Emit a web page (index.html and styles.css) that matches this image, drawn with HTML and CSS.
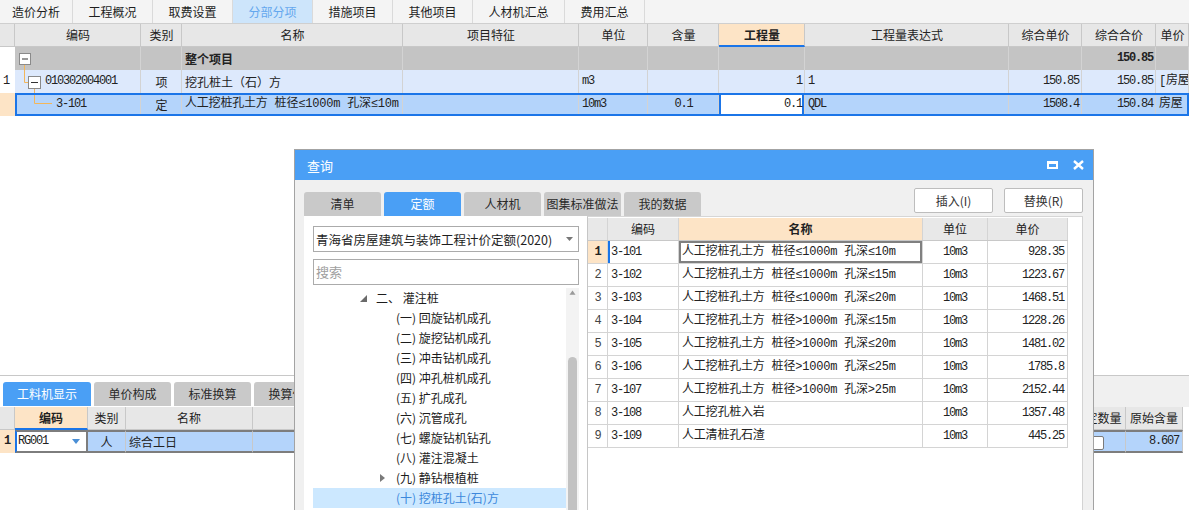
FILE: index.html
```html
<!DOCTYPE html>
<html lang="zh-CN">
<head>
<meta charset="utf-8">
<title>分部分项</title>
<link rel="stylesheet" href="styles.css">
</head>
<body>
<div class="app">
  <nav class="topnav">
    <span class="tab w73">造价分析</span>
    <span class="tab">工程概况</span>
    <span class="tab">取费设置</span>
    <span class="tab active">分部分项</span>
    <span class="tab">措施项目</span>
    <span class="tab">其他项目</span>
    <span class="tab w92">人材机汇总</span>
    <span class="tab">费用汇总</span>
  </nav>

  <div class="mtable">
    <div class="mrow mhead">
      <div></div><div>编码</div><div>类别</div><div>名称</div><div>项目特征</div><div>单位</div><div>含量</div><div class="hot">工程量</div><div>工程量表达式</div><div>综合单价</div><div>综合合价</div><div>单价</div>
    </div>
    <div class="mrow rgray">
      <div class="rn"></div>
      <div class="code"><svg class="conn w20" viewBox="0 0 20 23"><path d="M9.5 17V23" stroke="#f3b65a" fill="none"/><rect x="4.5" y="6.5" width="11" height="11" fill="#fff" stroke="#8a8a8a"/><path d="M7 12H13" stroke="#333"/></svg></div>
      <div></div>
      <div class="b">整个项目</div>
      <div></div><div></div><div></div><div></div><div></div><div></div>
      <div class="n b">150.85</div>
      <div></div>
    </div>
    <div class="mrow rlight">
      <div class="rn m">1</div>
      <div class="code"><svg class="conn w30" viewBox="0 0 30 23"><path d="M9.5 0V12.5H13" stroke="#f3b65a" fill="none"/><path d="M19.5 18V23" stroke="#f3b65a" fill="none"/><rect x="13.5" y="6.5" width="12" height="12" fill="#fff" stroke="#8a8a8a"/><path d="M16 12.5H23" stroke="#333"/></svg><span class="m">010302004001</span></div>
      <div class="c">项</div>
      <div>挖孔桩土（石）方</div>
      <div></div>
      <div class="m">m3</div>
      <div></div>
      <div class="n">1</div>
      <div class="m">1</div>
      <div class="n">150.85</div>
      <div class="n">150.85</div>
      <div class="mix">[房屋</div>
    </div>
    <div class="mrow rsel">
      <div class="rn peach"></div>
      <div class="code"><svg class="conn w41" viewBox="0 0 41 23"><path d="M19.5 0V10.5H37" stroke="#f3b65a" fill="none"/></svg><span class="m">3-101</span></div>
      <div class="c">定</div>
      <div class="mix">人工挖桩孔土方 桩径≤1000m 孔深≤10m</div>
      <div></div>
      <div class="m">10m3</div>
      <div class="m c">0.1</div>
      <div class="n cur">0.1</div>
      <div class="m">QDL</div>
      <div class="n">1508.4</div>
      <div class="n">150.84</div>
      <div class="mix">房屋</div>
    </div>
  </div>

  <div class="spacer"></div>

  <section class="bottom">
    <div class="btabs">
      <span class="btab on w88">工料机显示</span>
      <span class="btab">单价构成</span>
      <span class="btab">标准换算</span>
      <span class="btab">换算信息</span>
      <span class="bfill"></span>
    </div>
    <div class="btable">
      <div class="brow bhead">
        <div></div><div class="hot">编码</div><div>类别</div><div>名称</div><div></div><div>锁定数量</div><div>原始含量</div>
      </div>
      <div class="brow bsel">
        <div class="rn peach b m">1</div>
        <div class="combo"><span class="m">RG001</span><svg width="8" height="5" viewBox="0 0 8 5"><path d="M0 0H8L4 5Z" fill="#4a8fd6"/></svg></div>
        <div class="c">人</div>
        <div>综合工日</div>
        <div></div>
        <div class="c"><span class="chk"></span></div>
        <div class="n">8.607</div>
      </div>
    </div>
  </section>

  <div class="dialog">
    <div class="dtitle">
      <span>查询</span>
      <span class="dicons">
        <svg width="11" height="8" viewBox="0 0 11 8"><rect x="1" y="1.5" width="9" height="5.5" fill="none" stroke="#fff" stroke-width="2"/><rect x="0" y="0" width="11" height="3" fill="#fff"/></svg>
        <svg width="11" height="10" viewBox="0 0 11 10"><path d="M1 1L10 9M10 1L1 9" stroke="#fff" stroke-width="2.4"/></svg>
      </span>
    </div>
    <div class="dbody">
      <div class="dtoolbar">
        <div class="dtabs">
          <span class="dtab">清单</span>
          <span class="dtab on">定额</span>
          <span class="dtab">人材机</span>
          <span class="dtab">图集标准做法</span>
          <span class="dtab">我的数据</span>
        </div>
        <div class="dbtns">
          <button class="btn">插入(I)</button>
          <button class="btn">替换(R)</button>
        </div>
      </div>
      <div class="dcontent">
        <div class="left">
          <div class="select"><span>青海省房屋建筑与装饰工程计价定额(2020)</span><svg width="7" height="4" viewBox="0 0 7 4"><path d="M0 0H7L3.5 4Z" fill="#777"/></svg></div>
          <div class="search">搜索</div>
          <div class="tree">
            <div class="tlist">
              <div class="trow lvl1"><svg class="tri" width="7" height="7" viewBox="0 0 7 7"><path d="M7 0V7H0Z" fill="#6a6a6a"/></svg><span>二、 灌注桩</span></div>
              <div class="trow lvl2">(一) 回旋钻机成孔</div>
              <div class="trow lvl2">(二) 旋挖钻机成孔</div>
              <div class="trow lvl2">(三) 冲击钻机成孔</div>
              <div class="trow lvl2">(四) 冲孔桩机成孔</div>
              <div class="trow lvl2">(五) 扩孔成孔</div>
              <div class="trow lvl2">(六) 沉管成孔</div>
              <div class="trow lvl2">(七) 螺旋钻机钻孔</div>
              <div class="trow lvl2">(八) 灌注混凝土</div>
              <div class="trow lvl2b"><svg class="arr" width="5" height="8" viewBox="0 0 5 8"><path d="M0 0L5 4L0 8Z" fill="#7a7a7a"/></svg>(九) 静钻根植桩</div>
              <div class="trow lvl2 sel">(十) 挖桩孔土(石)方</div>
            </div>
            <div class="vscroll">
              <svg class="up" width="13" height="12" viewBox="0 0 13 12"><path d="M3 8H10L6.5 3Z" fill="#9a9a9a"/></svg>
              <div class="thumb"></div>
            </div>
          </div>
        </div>
        <div class="right">
          <div class="dtable">
            <div class="drow dhead"><div></div><div>编码</div><div class="hot">名称</div><div>单位</div><div>单价</div></div>
            <div class="drow first"><div class="rn peach b m">1</div><div class="m code1">3-101</div><div class="mix focus">人工挖桩孔土方 桩径≤1000m 孔深≤10m</div><div class="c m">10m3</div><div class="n">928.35</div></div>
            <div class="drow"><div class="rn m">2</div><div class="m">3-102</div><div class="mix">人工挖桩孔土方 桩径≤1000m 孔深≤15m</div><div class="c m">10m3</div><div class="n">1223.67</div></div>
            <div class="drow"><div class="rn m">3</div><div class="m">3-103</div><div class="mix">人工挖桩孔土方 桩径≤1000m 孔深≤20m</div><div class="c m">10m3</div><div class="n">1468.51</div></div>
            <div class="drow"><div class="rn m">4</div><div class="m">3-104</div><div class="mix">人工挖桩孔土方 桩径&gt;1000m 孔深≤15m</div><div class="c m">10m3</div><div class="n">1228.26</div></div>
            <div class="drow"><div class="rn m">5</div><div class="m">3-105</div><div class="mix">人工挖桩孔土方 桩径&gt;1000m 孔深≤20m</div><div class="c m">10m3</div><div class="n">1481.02</div></div>
            <div class="drow"><div class="rn m">6</div><div class="m">3-106</div><div class="mix">人工挖桩孔土方 桩径&gt;1000m 孔深≤25m</div><div class="c m">10m3</div><div class="n">1785.8</div></div>
            <div class="drow"><div class="rn m">7</div><div class="m">3-107</div><div class="mix">人工挖桩孔土方 桩径&gt;1000m 孔深&gt;25m</div><div class="c m">10m3</div><div class="n">2152.44</div></div>
            <div class="drow"><div class="rn m">8</div><div class="m">3-108</div><div class="mix">人工挖孔桩入岩</div><div class="c m">10m3</div><div class="n">1357.48</div></div>
            <div class="drow"><div class="rn m">9</div><div class="m">3-109</div><div class="mix">人工清桩孔石渣</div><div class="c m">10m3</div><div class="n">445.25</div></div>
          </div>
        </div>
      </div>
    </div>
  </div>
</div>
</body>
</html>
```

FILE: styles.css
```css
* { box-sizing: border-box; }
html, body { margin: 0; padding: 0; }
body {
  width: 1189px;
  height: 510px;
  overflow: hidden;
  background: #fff;
  font-family: "Noto Sans CJK SC", "Noto Sans", sans-serif;
  font-size: 12px;
  color: #222;
}
svg { display: block; }
.app { position: relative; height: 510px; display: flex; flex-direction: column; }

/* shared text helpers */
.m, .n { font-family: "Liberation Mono", "Noto Sans CJK SC", monospace; letter-spacing: -1.2px; }
.mix { font-family: "Liberation Mono", "Noto Sans CJK SC", monospace; letter-spacing: -0.2px; }
.n { text-align: right; }
.c { text-align: center; }
.b { font-weight: bold; }
.peach { background: #fde4c6 !important; }

/* top navigation */
.topnav { display: flex; height: 24px; background: #f4f4f4; border-bottom: 1px solid #cfcfcf; flex: none; }
.tab { width: 80px; border-right: 1px solid #dadada; text-align: center; line-height: 23px; color: #1e1e1e; }
.tab.w73 { width: 73px; }
.tab.w92 { width: 92px; }
.tab.active { background: #cde5fb; color: #64a7ee; }

/* main table */
.mtable { flex: none; }
.mrow {
  display: grid;
  grid-template-columns: 15px 126px 41px 221px 176px 69px 71px 86px 204px 73px 74px 1fr;
  height: 23px;
  position: relative;
}
.mrow > div {
  border-right: 1px solid #d3d3d3;
  line-height: 23px;
  padding: 0 2px 0 3px;
  white-space: nowrap;
  overflow: hidden;
}
.mhead > div {
  background: #e7e7e7;
  border-right-color: #c8c8c8;
  border-bottom: 1px solid #c8c8c8;
  text-align: center;
  line-height: 22px;
}
.mhead > div.hot { background: #fde4c6; font-weight: bold; border-bottom: 2px solid #1b75e8; line-height: 21px; }
.rgray > div { background: #c4c4c4; }
.rlight > div { background: #dde9fc; }
.rsel > div { background: #b4d4fb; }
.mrow > div.rn { background: #fff; border-right: none; padding-left: 3px; }
.mrow > div.rn.peach { background: #fde4c6; }
.mrow > div.code { padding: 0; display: flex; align-items: center; }
.conn { flex: none; height: 23px; }
.conn.w20 { width: 20px; }
.conn.w30 { width: 30px; }
.conn.w41 { width: 41px; }
.rsel::after {
  content: "";
  position: absolute;
  left: 15px; right: 0; top: 0; bottom: 0;
  border: 2px solid #1b75e8;
  pointer-events: none;
}
.rsel > div.cur { background: #fff; box-shadow: inset 2px 0 0 #1b75e8, inset -2px 0 0 #1b75e8; }

.spacer { flex: 1; }

/* bottom panel */
.bottom { height: 135px; flex: none; border-top: 1px solid #c8c8c8; display: flex; flex-direction: column; }
.btabs { height: 31px; display: flex; padding-left: 3px; gap: 3px; }
.btab {
  width: 77px;
  margin: 6px 0 1px;
  border-radius: 3px 3px 0 0;
  background: #c9c9c9;
  text-align: center;
  line-height: 24px;
  color: #2a2a2a;
}
.btab.w88 { width: 88px; }
.btab.on { background: #4a9ff5; color: #fff; }
.bfill { flex: 1; background: #f0f0f0; margin-left: -3px; }
.btable { width: 1183px; }
.brow { display: grid; grid-template-columns: 15px 73px 38px 127px 817px 56px 57px; height: 23px; }
.brow > div { border-right: 1px solid #c8c8c8; padding: 0 3px; white-space: nowrap; overflow: hidden; }
.bhead > div { background: #e7e7e7; border-bottom: 1px solid #c8c8c8; text-align: center; line-height: 22px; }
.bhead > div.hot { background: #fde4c6; font-weight: bold; border-bottom: 2px solid #1b75e8; line-height: 21px; }
.bsel > div {
  background: #b4d4fb;
  border-top: 2px solid #7d7d7d;
  border-bottom: 2px solid #7d7d7d;
  line-height: 19px;
}
.bsel > div.rn { border-top: none; border-bottom: none; border-right: none; line-height: 23px; padding-left: 4px; }
.bsel > div.combo {
  background: #fff;
  border-left: 2px solid #1b75e8;
  border-right: 2px solid #7d7d7d;
  display: flex;
  align-items: center;
  justify-content: space-between;
  padding: 0 6px 0 1px;
}
.chk { display: inline-block; width: 12px; height: 14px; background: #fff; border: 1px solid #7a7a7a; border-radius: 2px; vertical-align: middle; margin-top: -2px; }

/* dialog */
.dialog {
  position: absolute;
  left: 294px;
  top: 149px;
  width: 800px;
  height: 380px;
  border: 1px solid #a3a3a3;
  background: #f0f0f0;
  display: flex;
  flex-direction: column;
}
.dtitle {
  height: 30px;
  flex: none;
  background: #4a9ff5;
  color: #fff;
  font-size: 13px;
  display: flex;
  align-items: center;
  justify-content: space-between;
  padding: 0 9px 0 12px;
}
.dicons { display: flex; align-items: center; gap: 15px; }
.dbody { flex: 1; display: flex; flex-direction: column; padding: 0 10px 0 9px; min-height: 0; }
.dtoolbar { height: 36px; flex: none; display: flex; justify-content: space-between; }
.dtabs { display: flex; gap: 3px; align-self: flex-end; }
.dtab {
  width: 77px;
  height: 24px;
  line-height: 24px;
  text-align: center;
  background: #c9c9c9;
  border-radius: 3px 3px 0 0;
  color: #2a2a2a;
}
.dtab.on { background: #4a9ff5; color: #fff; }
.dbtns { display: flex; gap: 11px; padding-top: 8px; }
.btn {
  width: 79px;
  height: 25px;
  background: #fff;
  border: 1px solid #bdbdbd;
  border-radius: 2px;
  font-family: "Noto Sans CJK SC", sans-serif;
  font-size: 12px;
  color: #333;
  padding: 0;
}
.dcontent { flex: 1; display: flex; background: #fff; min-height: 0; }
.left { width: 283px; flex: none; padding: 10px 8px 0 9px; display: flex; flex-direction: column; }
.select {
  height: 26px;
  border: 1px solid #ababab;
  display: flex;
  align-items: center;
  justify-content: space-between;
  padding: 0 5px 0 2px;
  font-size: 12.5px;
  color: #1e1e1e;
  white-space: nowrap;
}
.search {
  height: 26px;
  margin-top: 7px;
  border: 1px solid #ababab;
  padding-left: 2px;
  line-height: 24px;
  font-size: 13px;
  color: #a0a0a0;
}
.tree { margin-top: 3px; flex: 1; display: flex; min-height: 0; }
.tlist { width: 253px; }
.trow { height: 20px; line-height: 20px; white-space: nowrap; color: #1c1c1c; display: flex; align-items: center; }
.trow.lvl1 { padding-left: 47px; }
.trow.lvl1 .tri { margin-right: 9px; }
.trow.lvl2 { padding-left: 83px; }
.trow.lvl2b { padding-left: 67px; }
.trow.lvl2b .arr { margin-right: 11px; }
.trow.sel { background: #cce8ff; color: #3d88dc; }
.vscroll { width: 13px; background: #f3f3f3; display: flex; flex-direction: column; align-items: center; }
.thumb { width: 9px; height: 200px; margin-top: 59px; background: #c2c2c2; border-radius: 5px; }

.right {
  flex: 1;
  border-left: 1px solid #c6c6c6;
  border-top: 1px solid #d6d6d6;
  border-right: 1px solid #d3d3d3;
  padding-top: 1px;
}
.dtable { width: 480px; }
.drow {
  display: grid;
  grid-template-columns: 20px 71px 244px 65px 80px;
  height: 23px;
  border-bottom: 1px solid #d4d4d4;
}
.drow > div {
  border-right: 1px solid #d4d4d4;
  line-height: 22px;
  padding: 0 3px;
  white-space: nowrap;
  overflow: hidden;
}
.dhead { border-bottom-color: #c8c8c8; }
.dhead > div { background: #e8e8e8; text-align: center; }
.dhead > div.hot { background: #fde4c6; font-weight: bold; }
.drow > div.rn { text-align: center; color: #444; padding: 0; }
.drow > div.rn.b { color: #222; }
.drow > div.code1 { box-shadow: inset 2px 0 0 #1b75e8; }
.drow > div.focus { box-shadow: inset 0 0 0 2px #808080; }
```
